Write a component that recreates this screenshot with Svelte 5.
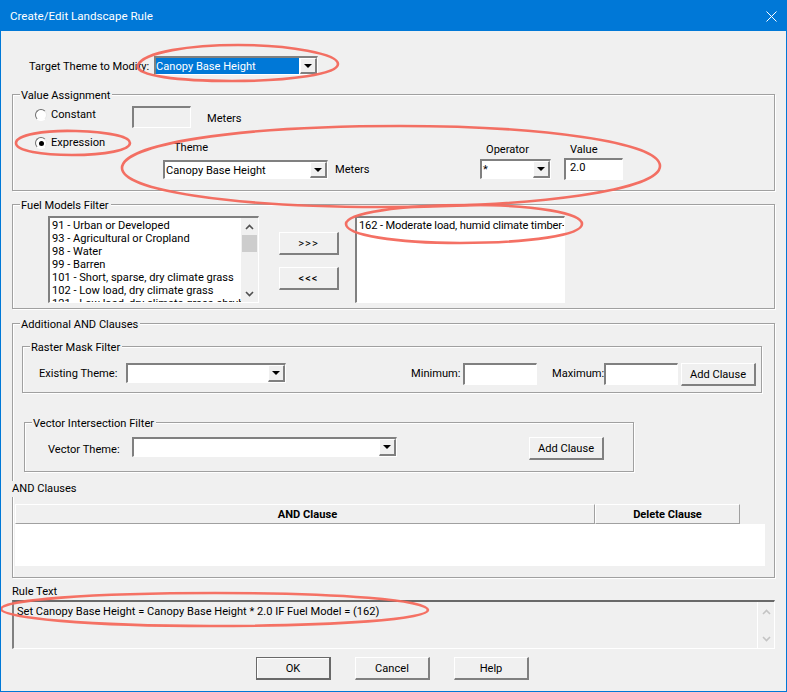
<script lang="ts">
  const fuelModels = [
    '91 - Urban or Developed',
    '93 - Agricultural or Cropland',
    '98 - Water',
    '99 - Barren',
    '101 - Short, sparse, dry climate grass',
    '102 - Low load, dry climate grass',
    '121 - Low load, dry climate grass-shrub',
  ];
</script>

{#snippet arrow()}
  <svg class="tri" width="8" height="4" viewBox="0 0 8 4"><path d="M0 0h8L4 4z" fill="#000" /></svg>
{/snippet}

{#snippet combo(cls: string, text: string = '', selected: boolean = false)}
  <div class="combo {cls}">
    <span class="combo-val" class:selected>{text}</span>
    <span class="combo-btn">{@render arrow()}</span>
  </div>
{/snippet}

{#snippet chevron(up: boolean, color: string = '#505050')}
  <svg width="9" height="6" viewBox="0 0 9 6">
    <path d={up ? 'M1 5l3.5-3.5L8 5' : 'M1 1l3.5 3.5L8 1'} fill="none" stroke={color} stroke-width="1.6" />
  </svg>
{/snippet}

<div class="window">
  <header class="titlebar">
    <span>Create/Edit Landscape Rule</span>
    <svg class="close" width="11" height="11" viewBox="0 0 11 11">
      <path d="M.5.5l10 10M10.5.5l-10 10" stroke="#fff" stroke-width="1" fill="none" />
    </svg>
  </header>

  <main class="body">
    <div class="target-row">
      <span class="target-label">Target Theme to Modify:</span>
      {@render combo('c-target', 'Canopy Base Height', true)}
    </div>

    <section class="group value-group">
      <span class="legend">Value Assignment</span>
      <div class="constant-row">
        <span class="radio-label">
          <span class="radio"></span>Constant
        </span>
        <div class="input c-constant"></div>
        <span class="meters-top">Meters</span>
      </div>
      <div class="expr-row">
        <span class="radio-label">
          <span class="radio checked"></span>Expression
        </span>
        <div class="col">
          <span class="theme-label">Theme</span>
          {@render combo('c-theme', 'Canopy Base Height')}
        </div>
        <span class="meters-expr">Meters</span>
        <div class="col">
          <span class="op-label">Operator</span>
          {@render combo('c-op', '*')}
        </div>
        <div class="col">
          <span class="val-label">Value</span>
          <div class="input c-value">2.0</div>
        </div>
      </div>
    </section>

    <section class="group fuel-group">
      <span class="legend">Fuel Models Filter</span>
      <div class="fuel-row">
        <div class="list">
          <div class="list-items">
            {#each fuelModels as m}<div class="list-item">{m}</div>{/each}
          </div>
          <div class="scroll">
            {@render chevron(true)}
            <span class="thumb"></span>
            <span class="grow"></span>
            {@render chevron(false)}
          </div>
        </div>
        <div class="move-btns">
          <button class="btn btn-move">&gt;&gt;&gt;</button>
          <button class="btn btn-move">&lt;&lt;&lt;</button>
        </div>
        <div class="list list-right">
          <div class="list-items">
            <div class="list-item">162 - Moderate load, humid climate timber-shrub</div>
          </div>
        </div>
      </div>
    </section>

    <section class="group and-group">
      <span class="legend">Additional AND Clauses</span>

      <section class="group raster-group">
        <span class="legend">Raster Mask Filter</span>
        <div class="raster-row">
          <span class="lbl-existing">Existing Theme:</span>
          {@render combo('c-existing')}
          <span class="lbl-min">Minimum:</span>
          <div class="input c-range"></div>
          <span class="lbl-max">Maximum:</span>
          <div class="input c-range"></div>
          <button class="btn btn-add">Add Clause</button>
        </div>
      </section>

      <section class="group vector-group">
        <span class="legend">Vector Intersection Filter</span>
        <div class="vector-row">
          <span class="lbl-vector">Vector Theme:</span>
          {@render combo('c-vector')}
          <button class="btn btn-add btn-add-vector">Add Clause</button>
        </div>
      </section>

      <div class="and-label">AND Clauses</div>
      <div class="grid">
        <div class="grid-head">
          <div class="th th-clause">AND Clause</div>
          <div class="th th-delete">Delete Clause</div>
        </div>
        <div class="grid-body"></div>
      </div>
    </section>

    <div class="rule-label">Rule Text</div>
    <div class="rule-box">
      <div class="rule-text">Set Canopy Base Height = Canopy Base Height * 2.0 IF Fuel Model = (162)</div>
      <div class="rule-scroll">
        {@render chevron(true, '#c4c4c4')}
        {@render chevron(false, '#c4c4c4')}
      </div>
    </div>

    <div class="actions">
      <button class="btn btn-action btn-default">OK</button>
      <button class="btn btn-action">Cancel</button>
      <button class="btn btn-action">Help</button>
    </div>
  </main>

  <!-- hand-drawn annotations on top of the dialog -->
  <svg class="marks" width="787" height="692" viewBox="0 0 787 692">
    <g fill="none" stroke="#f4695c" stroke-width="2.6" opacity="0.95">
      <path d="M138 65C144 52 190 45 238 45C290 45 338 54 338 64C338 74 290 81 232 81C180 81 134 76 138 65Z" />
      <path d="M16 143C16 135 44 130 76 131C106 132 130 136 130 143C130 150 106 155 72 155C42 155 16 151 16 143Z" />
      <path d="M122 168C122 145 230 126 400 126C540 126 660 142 660 166C660 190 540 207 380 207C230 207 122 190 122 168Z" />
      <path d="M346 224C346 213 400 205 470 205C535 205 582 213 582 224C582 235 530 243 460 243C395 243 346 235 346 224Z" />
      <path d="M1 609C1 600 90 593 215 593C340 593 428 600 428 610C428 619 340 626 210 626C90 626 1 618 1 609Z" />
    </g>
  </svg>
</div>

<style>
  :global(body) {
    margin: 0;
    background: #f0f0f0;
  }
  .window {
    position: relative;
    width: 787px;
    height: 692px;
    box-sizing: border-box;
    border: 1px solid #0078d7;
    border-top: 0;
    background: #f0f0f0;
    font: 11.1px/16px Roboto, "Open Sans", sans-serif;
    color: #000;
    overflow: hidden;
  }
  .titlebar {
    height: 31px;
    box-sizing: border-box;
    margin: 0 -1px;
    padding: 1px 10px 0 10px;
    background: #0078d7;
    color: #fff;
    font-size: 11.6px;
    display: flex;
    align-items: center;
    justify-content: space-between;
  }
  .body {
    padding: 25px 11px 0;
  }

  /* win32 look: sunken fields, raised buttons, etched frames */
  .input,
  .combo {
    box-sizing: border-box;
    border: 1px solid #fff;
    border-top: 2px solid #808080;
    border-left: 2px solid #808080;
    background: #fff;
  }
  .input {
    padding: 1px 3px;
    line-height: 16px;
  }
  .combo {
    display: flex;
    align-items: stretch;
  }
  .combo-val {
    flex: 1;
    min-width: 0;
    padding: 0 1px;
    line-height: 17px;
    white-space: nowrap;
    overflow: hidden;
  }
  .combo-val.selected {
    background: #0078d7;
    color: #fff;
    padding: 0;
    margin-right: 1px;
  }
  .combo-btn {
    width: 17px;
    flex: none;
    box-sizing: border-box;
    background: #f0f0f0;
    border-right: 2px solid #808080;
    border-bottom: 2px solid #808080;
    border-top: 1px solid #fff;
    border-left: 1px solid #fff;
    display: flex;
    align-items: center;
    justify-content: center;
  }
  .tri { display: block; }

  .btn {
    box-sizing: border-box;
    margin: 0;
    padding: 1px 0 0;
    background: #f0f0f0;
    border: 1px solid #fff;
    border-right: 2px solid #808080;
    border-bottom: 2px solid #808080;
    font: inherit;
    color: #000;
    outline: 0;
  }

  .group {
    position: relative;
    box-sizing: border-box;
    border: 1px solid #a0a0a0;
    box-shadow: 1px 1px 0 #fff, inset 1px 1px 0 #fff;
  }
  .legend {
    position: absolute;
    top: -7px;
    left: 7px;
    padding: 0 2px 0 1px;
    background: #f0f0f0;
  }

  .target-row {
    display: flex;
    height: 20px;
    align-items: flex-start;
  }
  .target-label {
    margin: 3px 0 0 17px;
    width: 125px;
    white-space: nowrap;
  }
  .c-target {
    width: 164px;
    height: 19px;
  }

  .value-group {
    margin-top: 18px;
    height: 97px;
  }
  .constant-row {
    display: flex;
    align-items: flex-start;
    padding: 11px 0 0 22px;
    height: 22px;
  }
  .radio-label {
    display: flex;
    align-items: center;
    white-space: nowrap;
    gap: 4px;
    height: 16px;
  }
  .constant-row .radio-label {
    width: 97px;
    margin-top: 1px;
  }
  .expr-row .radio-label {
    margin-top: -2px;
  }
  .radio {
    width: 12px;
    height: 12px;
    box-sizing: border-box;
    border-radius: 50%;
    background: #fff;
    border: 1px solid;
    border-color: #6d6d6d #e8e8e8 #fff #6d6d6d;
    position: relative;
    flex: none;
  }
  .radio.checked::after {
    content: "";
    position: absolute;
    left: 2.5px;
    top: 2.5px;
    width: 5px;
    height: 5px;
    border-radius: 50%;
    background: #000;
  }
  .c-constant {
    width: 59px;
    height: 22px;
    background: #f0f0f0;
  }
  .meters-top {
    margin: 5px 0 0 16px;
  }
  .expr-row {
    display: grid;
    grid-template-columns: 128px 165px 152px 84px 59px;
    align-items: start;
    padding: 9px 0 0 22px;
  }
  .col {
    display: flex;
    flex-direction: column;
    align-items: flex-start;
  }
  .theme-label {
    margin: 3px 0 4px 11px;
  }
  .op-label {
    margin: 5px 0 1px 6px;
  }
  .val-label {
    margin: 5px 0 0 6px;
  }
  .c-theme {
    width: 165px;
    height: 19px;
  }
  .c-op {
    width: 71px;
    height: 20px;
  }
  .c-value {
    width: 59px;
    height: 22px;
    padding: 0 4px;
  }
  .meters-expr {
    margin: 25px 0 0 7px;
  }

  .fuel-group {
    margin-top: 13px;
    height: 105px;
  }
  .fuel-row {
    display: flex;
    align-items: flex-start;
    padding: 11px 0 0 35px;
  }
  .list {
    box-sizing: border-box;
    width: 211px;
    height: 87px;
    display: flex;
    border: 1px solid #fff;
    border-top: 2px solid #808080;
    border-left: 2px solid #808080;
    background: #fff;
    overflow: hidden;
  }
  .list-items {
    flex: 1;
    min-width: 0;
    overflow: hidden;
    padding: 1px 0 0 2px;
  }
  .list-item {
    height: 13px;
    line-height: 13px;
    white-space: nowrap;
  }
  .scroll {
    width: 17px;
    flex: none;
    display: flex;
    flex-direction: column;
    align-items: center;
    padding: 6px 0 5px;
    box-sizing: border-box;
    background: #f0f0f0;
  }
  .thumb {
    width: 15px;
    height: 17px;
    margin-top: 5px;
    background: #cdcdcd;
  }
  .grow { flex: 1; }
  .move-btns {
    display: flex;
    flex-direction: column;
    gap: 12px;
    margin: 16px 16px 0 20px;
  }
  .btn-move {
    width: 60px;
    height: 23px;
    letter-spacing: 1px;
  }
  .list-right {
    width: 210px;
    letter-spacing: -0.13px;
  }

  .and-group {
    margin-top: 14px;
    height: 255px;
  }
  .raster-group {
    margin: 22px 0 0 9px;
    width: 740px;
    height: 47px;
  }
  .raster-row {
    display: flex;
    align-items: flex-start;
    padding-top: 16px;
  }
  .lbl-existing {
    width: 87px;
    margin: 3px 0 0 16px;
    white-space: nowrap;
  }
  .c-existing {
    width: 160px;
    height: 20px;
  }
  .lbl-min {
    width: 52px;
    margin: 3px 0 0 125px;
    white-space: nowrap;
  }
  .c-range {
    width: 74px;
    height: 22px;
  }
  .lbl-max {
    width: 52px;
    margin: 3px 0 0 15px;
    white-space: nowrap;
  }
  .btn-add {
    width: 75px;
    height: 23px;
    margin-left: 3px;
  }
  .vector-group {
    margin: 29px 0 0 11px;
    width: 610px;
    height: 50px;
  }
  .vector-row {
    display: flex;
    align-items: flex-start;
    padding-top: 14px;
  }
  .lbl-vector {
    width: 84px;
    margin: 5px 0 0 23px;
    white-space: nowrap;
  }
  .c-vector {
    width: 265px;
    height: 20px;
  }
  .btn-add-vector {
    margin-left: 132px;
  }
  .and-label {
    width: fit-content;
    margin: 9px 0 0 -1px;
    background: #f0f0f0;
    position: relative;
  }
  .grid {
    margin: 7px 0 0 2px;
    width: 750px;
  }
  .grid-head {
    display: flex;
    height: 20px;
  }
  .th {
    box-sizing: border-box;
    height: 20px;
    border-top: 1px solid #fff;
    border-left: 1px solid #fff;
    border-right: 1px solid #a0a0a0;
    border-bottom: 1px solid #a0a0a0;
    font-weight: 700;
    text-align: center;
    line-height: 20px;
  }
  .th-clause {
    width: 580px;
    padding-left: 5px;
  }
  .th-delete {
    width: 145px;
  }
  .grid-body {
    height: 42px;
    background: #fff;
  }

  .rule-label {
    margin-top: 6px;
    height: 16px;
  }
  .rule-box {
    box-sizing: border-box;
    height: 49px;
    display: flex;
    border: 1px solid #fff;
    border-top: 2px solid #696969;
    border-left: 2px solid #808080;
  }
  .rule-text {
    flex: 1;
    padding: 2px 0 0 3px;
    white-space: nowrap;
  }
  .rule-scroll {
    width: 17px;
    box-sizing: border-box;
    border-left: 1px solid #fff;
    display: flex;
    flex-direction: column;
    align-items: center;
    justify-content: space-between;
    padding: 7px 0 6px;
  }

  .actions {
    display: flex;
    gap: 24px;
    margin: 8px 0 0 244px;
  }
  .btn-action {
    width: 75px;
    height: 23px;
  }
  .btn-default {
    border: 1px solid #696969;
    border-right: 2px solid #696969;
    border-bottom: 2px solid #696969;
    box-shadow: inset 1px 1px 0 #fff;
  }

  .marks {
    position: absolute;
    left: -1px;
    top: 0;
    pointer-events: none;
  }
</style>
